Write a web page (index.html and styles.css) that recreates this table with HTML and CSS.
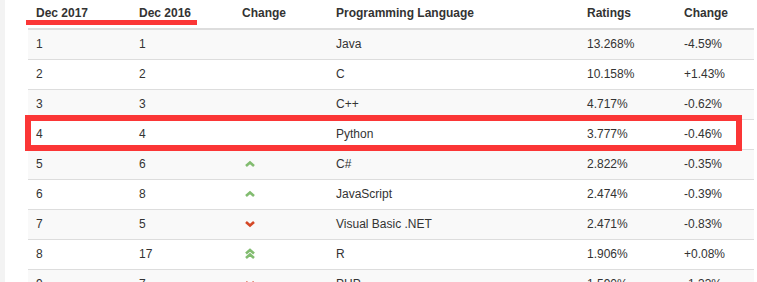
FILE: index.html
```html
<!DOCTYPE html>
<html lang="en">
<head>
    <meta charset="UTF-8">
    <title>TIOBE Index</title>
    <link rel="stylesheet" href="styles.css">
</head>
<body>
    <div class="page">
        <table class="ranking">
            <colgroup>
                <col class="c-rank"><col class="c-rank"><col class="c-change">
                <col class="c-lang"><col class="c-rating"><col class="c-delta">
            </colgroup>
            <thead>
                <tr>
                    <th>Dec 2017</th>
                    <th>Dec 2016</th>
                    <th>Change</th>
                    <th>Programming Language</th>
                    <th>Ratings</th>
                    <th>Change</th>
                </tr>
            </thead>
            <tbody>
                <tr><td>1</td><td>1</td><td></td><td>Java</td><td>13.268%</td><td>-4.59%</td></tr>
                <tr><td>2</td><td>2</td><td></td><td>C</td><td>10.158%</td><td>+1.43%</td></tr>
                <tr><td>3</td><td>3</td><td></td><td>C++</td><td>4.717%</td><td>-0.62%</td></tr>
                <tr class="marked"><td>4</td><td>4</td><td></td><td>Python</td><td>3.777%</td><td>-0.46%</td></tr>
                <tr>
                    <td>5</td><td>6</td>
                    <td class="trend"><svg class="up" width="12" height="8" viewBox="0 0 12 8"><path d="M2 6 L6 2.5 L10 6"/></svg></td>
                    <td>C#</td><td>2.822%</td><td>-0.35%</td>
                </tr>
                <tr>
                    <td>6</td><td>8</td>
                    <td class="trend"><svg class="up" width="12" height="8" viewBox="0 0 12 8"><path d="M2 6 L6 2.5 L10 6"/></svg></td>
                    <td>JavaScript</td><td>2.474%</td><td>-0.39%</td>
                </tr>
                <tr>
                    <td>7</td><td>5</td>
                    <td class="trend"><svg class="down" width="12" height="8" viewBox="0 0 12 8"><path d="M2 2 L6 5.5 L10 2"/></svg></td>
                    <td>Visual Basic .NET</td><td>2.471%</td><td>-0.83%</td>
                </tr>
                <tr>
                    <td>8</td><td>17</td>
                    <td class="trend"><svg class="up" width="12" height="12" viewBox="0 0 12 12"><path d="M2 5.5 L6 2 L10 5.5 M2 10 L6 6.5 L10 10"/></svg></td>
                    <td>R</td><td>1.906%</td><td>+0.08%</td>
                </tr>
                <tr>
                    <td>9</td><td>7</td>
                    <td class="trend"><svg class="down" width="12" height="8" viewBox="0 0 12 8"><path d="M2 2 L6 5.5 L10 2"/></svg></td>
                    <td>PHP</td><td>1.590%</td><td>-1.33%</td>
                </tr>
            </tbody>
        </table>

        <!-- annotation marks drawn over the screenshot -->
        <div class="mark-underline"></div>
        <div class="mark-box"></div>
    </div>
</body>
</html>
```

FILE: styles.css
```css
* {
    margin: 0;
    padding: 0;
    box-sizing: border-box;
}

body {
    background: #f3f3f3;
    font-family: 'Liberation Sans', Arial, sans-serif;
    font-size: 12px;
    color: #333;
    overflow: hidden;
    height: 282px;
}

.page {
    position: relative;
    margin-left: 5px;
    padding-left: 23px;
    background: #fff;
    height: 282px;
}

.ranking {
    width: 726px;
    border-collapse: collapse;
    table-layout: fixed;
}

.c-rank:nth-child(1) { width: 103px; }
.c-rank:nth-child(2) { width: 103px; }
.c-change { width: 94px; }
.c-lang { width: 251px; }
.c-rating { width: 97px; }
.c-delta { width: 78px; }

.ranking th {
    height: 29px;
    padding: 0 8px 2px;
    text-align: left;
    font-weight: bold;
    color: #333;
    border-bottom: 2px solid #ddd;
    vertical-align: middle;
}

.ranking td {
    height: 30px;
    padding: 0 8px;
    border-top: 1px solid #ddd;
    vertical-align: middle;
    white-space: nowrap;
}

.ranking tbody tr:nth-child(odd) {
    background: #f9f9f9;
}

.ranking tr.marked {
    background: #fff;
}

.trend {
    line-height: 0;
}

.trend svg {
    margin-left: 2px;
    fill: none;
    stroke-width: 2.6;
    stroke-linecap: butt;
}

.trend .up { stroke: #82bc70; }
.trend .down { stroke: #d44827; }

/* Red annotation marks */
.mark-underline {
    position: absolute;
    left: 21px;
    top: 20px;
    width: 171px;
    height: 5px;
    background: #fb3636;
}

.mark-box {
    position: absolute;
    left: 20px;
    top: 115px;
    width: 717px;
    height: 36px;
    border: 6px solid #fb3636;
}
```
